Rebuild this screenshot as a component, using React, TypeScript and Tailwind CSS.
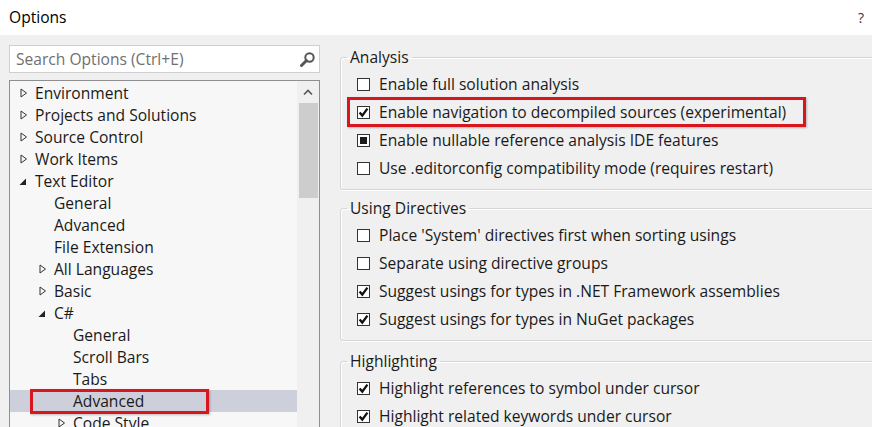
import React from "react";

type Node = { level: 0 | 1 | 2; label: string; arrow?: "c" | "e"; selected?: boolean };

const tree: Node[] = [
  { level: 0, label: "Environment", arrow: "c" },
  { level: 0, label: "Projects and Solutions", arrow: "c" },
  { level: 0, label: "Source Control", arrow: "c" },
  { level: 0, label: "Work Items", arrow: "c" },
  { level: 0, label: "Text Editor", arrow: "e" },
  { level: 1, label: "General" },
  { level: 1, label: "Advanced" },
  { level: 1, label: "File Extension" },
  { level: 1, label: "All Languages", arrow: "c" },
  { level: 1, label: "Basic", arrow: "c" },
  { level: 1, label: "C#", arrow: "e" },
  { level: 2, label: "General" },
  { level: 2, label: "Scroll Bars" },
  { level: 2, label: "Tabs" },
  { level: 2, label: "Advanced", selected: true },
  { level: 2, label: "Code Style", arrow: "c" },
];

const indent: Record<number, string> = { 0: "pl-[8px]", 1: "pl-[27px]", 2: "pl-[46px]" };

function Arrow({ kind }: { kind?: "c" | "e" }) {
  if (kind === "c")
    return (
      <svg width="8" height="10" viewBox="0 0 8 10" className="ml-[2px]">
        <path d="M1 1 L6.5 5 L1 9 Z" fill="none" stroke="#333" strokeWidth="1" />
      </svg>
    );
  if (kind === "e")
    return (
      <svg width="8" height="8" viewBox="0 0 8 8" className="ml-[1px] mt-[2px]">
        <path d="M7 0.5 L7 7 L0.5 7 Z" fill="#222" />
      </svg>
    );
  return null;
}

type CB = "off" | "on" | "ind";

function Checkbox({ state }: { state: CB }) {
  return (
    <div className="w-[13px] h-[13px] border border-[#333333] bg-white flex items-center justify-center shrink-0">
      {state === "on" && (
        <svg width="11" height="11" viewBox="0 0 11 11">
          <path d="M1.6 5.4 L4.3 8.6 L9.4 1.6" fill="none" stroke="#111" strokeWidth="2.3" />
        </svg>
      )}
      {state === "ind" && <div className="w-[7px] h-[7px] bg-[#1b1b1b]" />}
    </div>
  );
}

function Row({ state, label, boxed }: { state: CB; label: string; boxed?: boolean }) {
  return (
    <div className="relative h-[28px] flex items-center gap-[9px]">
      <Checkbox state={state} />
      <span className="whitespace-nowrap pt-[2px]">{label}</span>
      {boxed && (
        <div className="absolute left-[-10px] top-[-1px] w-[459px] h-[30px] border-[3px] border-[#d8161d] shadow-[1px_1px_2px_rgba(0,0,0,0.25)]" />
      )}
    </div>
  );
}

function Group({ title, children, className = "" }: { title: string; children: React.ReactNode; className?: string }) {
  return (
    <fieldset
      className={
        "w-[560px] border border-[#d6d6d6] rounded-[3px] pl-[6px] pb-[7px] shadow-[inset_1px_1px_0_#ffffff,1px_1px_0_#ffffff] " +
        className
      }
    >
      <legend className="px-[3px] leading-[20px]">{title}</legend>
      <div className="pl-[10px] pt-[3px]">{children}</div>
    </fieldset>
  );
}

export default function App() {
  return (
    <div
      className="w-[872px] h-[427px] overflow-hidden bg-[#f0f0f0] text-[15.6px] text-[#1a1a1a]"
      style={{ fontFamily: '"Open Sans", "Noto Sans", "Liberation Sans", sans-serif' }}
    >
      {/* title bar */}
      <div className="h-[35px] bg-white flex items-center justify-between pl-[9px] pr-[8px]">
        <span className="text-[15.6px] text-black">Options</span>
        <span className="text-[14px] text-[#333]">?</span>
      </div>

      <div className="flex pt-[10px]">
        {/* left column */}
        <div className="pl-[9px] w-[320px] shrink-0 flex flex-col gap-[7px]">
          <div className="h-[28px] bg-white border border-[#cfcfcf] flex items-center justify-between pl-[6px] pr-[3px]">
            <span className="text-[#707070] text-[15.6px] pt-[2px]">Search Options (Ctrl+E)</span>
            <svg width="17" height="17" viewBox="0 0 17 17">
              <circle cx="10.5" cy="6.5" r="4.2" fill="none" stroke="#555" strokeWidth="2" />
              <path d="M7.5 9.5 L2.5 14.5" stroke="#555" strokeWidth="3" strokeLinecap="round" />
            </svg>
          </div>

          <div className="h-[360px] border border-[#8f8f8f] bg-[#f7f7f7] flex overflow-hidden">
            <div className="flex-1 pt-[1px]">
              {tree.map((n, i) => (
                <div
                  key={i}
                  className={
                    "relative h-[22px] flex items-center " +
                    indent[n.level] +
                    (n.selected ? " bg-[#cdcfdb]" : "")
                  }
                >
                  <div className="w-[17px] flex items-center">
                    <Arrow kind={n.arrow} />
                  </div>
                  <span className="whitespace-nowrap text-[15.6px] pt-[2px]">{n.label}</span>
                  {n.selected && (
                    <div className="absolute left-[20px] top-[-1px] w-[179px] h-[25px] border-[3px] border-[#d8161d] shadow-[1px_1px_2px_rgba(0,0,0,0.25)]" />
                  )}
                </div>
              ))}
            </div>
            <div className="w-[22px] bg-[#f0f0f0] flex flex-col items-center">
              <div className="h-[22px] flex items-center justify-center">
                <svg width="10" height="7" viewBox="0 0 10 7">
                  <path d="M1 5.5 L5 1.5 L9 5.5" fill="none" stroke="#555" strokeWidth="1.6" />
                </svg>
              </div>
              <div className="w-[19px] h-[95px] bg-[#cdcdcd]" />
            </div>
          </div>
        </div>

        {/* right column */}
        <div className="pl-[20px] pt-[2px] flex flex-col">
          <Group title="Analysis">
            <Row state="off" label="Enable full solution analysis" />
            <Row state="on" label="Enable navigation to decompiled sources (experimental)" boxed />
            <Row state="ind" label="Enable nullable reference analysis IDE features" />
            <Row state="off" label="Use .editorconfig compatibility mode (requires restart)" />
          </Group>
          <Group title="Using Directives" className="mt-[8px]">
            <Row state="off" label="Place 'System' directives first when sorting usings" />
            <Row state="off" label="Separate using directive groups" />
            <Row state="on" label="Suggest usings for types in .NET Framework assemblies" />
            <Row state="on" label="Suggest usings for types in NuGet packages" />
          </Group>
          <Group title="Highlighting" className="mt-[10px]">
            <Row state="on" label="Highlight references to symbol under cursor" />
            <Row state="on" label="Highlight related keywords under cursor" />
          </Group>
        </div>
      </div>
    </div>
  );
}
